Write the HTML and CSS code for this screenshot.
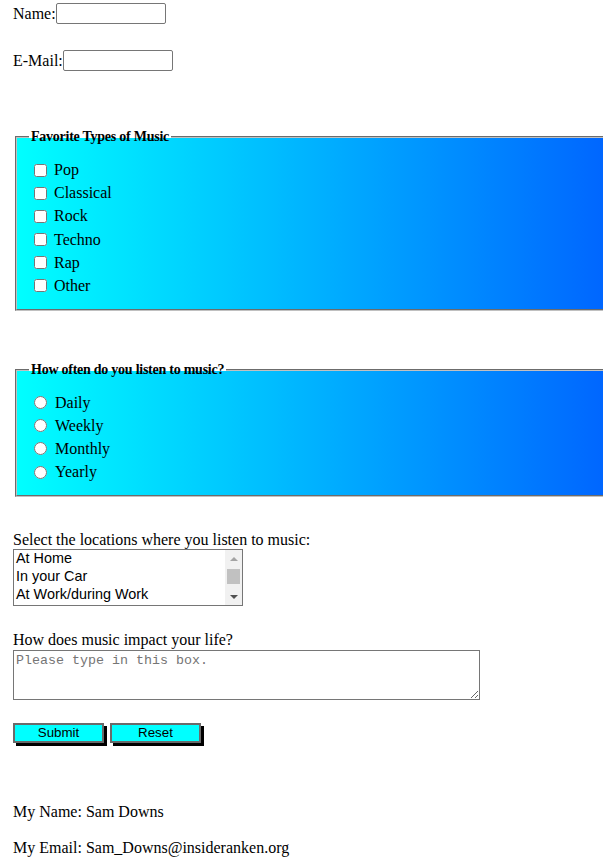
FILE: index.html
```html
<!DOCTYPE html>
<html lang="en">
<head>
<meta charset="utf-8">
<title>Music Survey</title>
<link rel="stylesheet" href="styles.css">
</head>
<body class="page">
<form class="survey">
  <div class="field-row">
    <label for="name">Name:</label>
    <input class="text-input" id="name" type="text">
  </div>
  <div class="field-row field-row--email">
    <label for="email">E-Mail:</label>
    <input class="text-input" id="email" type="text">
  </div>

  <fieldset class="group group--first">
    <legend class="group-title">Favorite Types of Music</legend>
    <div class="options">
      <label class="option"><input class="check" type="checkbox"><span>Pop</span></label>
      <label class="option"><input class="check" type="checkbox"><span>Classical</span></label>
      <label class="option"><input class="check" type="checkbox"><span>Rock</span></label>
      <label class="option"><input class="check" type="checkbox"><span>Techno</span></label>
      <label class="option"><input class="check" type="checkbox"><span>Rap</span></label>
      <label class="option"><input class="check" type="checkbox"><span>Other</span></label>
    </div>
  </fieldset>

  <fieldset class="group group--second">
    <legend class="group-title">How often do you listen to music?</legend>
    <div class="options">
      <label class="option option--radio"><input class="radio" type="radio" name="often"><span>Daily</span></label>
      <label class="option option--radio"><input class="radio" type="radio" name="often"><span>Weekly</span></label>
      <label class="option option--radio"><input class="radio" type="radio" name="often"><span>Monthly</span></label>
      <label class="option option--radio"><input class="radio" type="radio" name="often"><span>Yearly</span></label>
    </div>
  </fieldset>

  <div class="block-label block-label--select">Select the locations where you listen to music:</div>
  <div class="listbox" role="listbox">
    <div class="listbox-items">
      <div class="listbox-item" role="option">At Home</div>
      <div class="listbox-item" role="option">In your Car</div>
      <div class="listbox-item" role="option">At Work/during Work</div>
    </div>
    <div class="scrollbar">
      <div class="scroll-btn"><span class="arrow-up"></span></div>
      <div class="scroll-track"><div class="scroll-thumb"></div></div>
      <div class="scroll-btn"><span class="arrow-down"></span></div>
    </div>
  </div>

  <label class="block-label block-label--area" for="impact">How does music impact your life?</label>
  <textarea class="textbox" id="impact" placeholder="Please type in this box."></textarea>

  <div class="actions">
    <button class="btn" type="submit">Submit</button>
    <button class="btn" type="reset">Reset</button>
  </div>
</form>

<div class="info">
  <p class="info-line">My Name: Sam Downs</p>
  <p class="info-line info-line--second">My Email: Sam_Downs@insideranken.org</p>
</div>
</body>
</html>
```

FILE: styles.css
```css
html, body {
  overflow: hidden;
}

.page {
  margin: 0;
  padding: 3px 0 0 13px;
  font-family: "Liberation Serif", "Times New Roman", serif;
  font-size: 16px;
  color: #000;
  background: #fff;
}

.survey {
  margin: 0;
}

.field-row {
  display: flex;
  align-items: center;
  gap: 0;
  height: 21px;
}

.field-row--email {
  margin-top: 26px;
}

.text-input {
  box-sizing: border-box;
  width: 110px;
  height: 21px;
  margin: 0;
  padding: 1px 2px;
  border: 1px solid #767676;
  border-radius: 2px;
  background: #fff;
  font-family: "Liberation Sans", Arial, sans-serif;
  font-size: 13.33px;
}

.group {
  box-sizing: border-box;
  width: 640px;
  margin: 57px 0 0 2px;
  padding: 0 12px 11px 12px;
  border: 2px groove #c0c0c0;
  background: linear-gradient(to right, #00ffff 0px, #0066ff 588px, #0060ff 640px);
}

.group--second {
  margin-top: 50px;
}

.group-title {
  padding: 0 2px;
  font-weight: bold;
  font-size: 14px;
  letter-spacing: -0.25px;
  line-height: 18.4px;
}

.options {
  display: flex;
  flex-direction: column;
  margin-top: 12px;
}

.option {
  display: flex;
  align-items: center;
  gap: 7px;
  height: 23.2px;
  padding-left: 5px;
}

.option--radio {
  gap: 8px;
}

.check,
.radio {
  width: 13px;
  height: 13px;
  margin: 0;
}

.block-label {
  display: block;
  line-height: 18.4px;
}

.block-label--select {
  margin-top: 34px;
}

.block-label--area {
  margin-top: 25px;
}

.listbox {
  box-sizing: border-box;
  display: flex;
  width: 230px;
  height: 57px;
  border: 1px solid #767676;
  background: #fff;
}

.listbox-items {
  flex: 1;
  margin-top: -1px;
  padding: 0 2px;
  font-family: "Liberation Sans", Arial, sans-serif;
  font-size: 14.4px;
  line-height: 18px;
  overflow: hidden;
}

.scrollbar {
  display: flex;
  flex-direction: column;
  width: 17px;
  background: #f1f1f1;
}

.scroll-btn {
  display: flex;
  align-items: center;
  justify-content: center;
  height: 17px;
}

.scroll-track {
  flex: 1;
  padding: 2px 2px 0;
}

.scroll-thumb {
  height: 15px;
  background: #c1c1c1;
}

.arrow-up {
  width: 0;
  height: 0;
  border-left: 4px solid transparent;
  border-right: 4px solid transparent;
  border-bottom: 4px solid #a3a3a3;
}

.arrow-down {
  width: 0;
  height: 0;
  border-left: 4px solid transparent;
  border-right: 4px solid transparent;
  border-top: 4px solid #505050;
}

.textbox {
  display: block;
  box-sizing: border-box;
  width: 467px;
  height: 50px;
  margin: 0;
  padding: 2px;
  border: 1px solid #767676;
  border-radius: 0;
  font-family: "Liberation Mono", "Courier New", monospace;
  font-size: 13.33px;
  resize: both;
}

.textbox::placeholder {
  color: #757575;
}

.actions {
  display: flex;
  gap: 6px;
  margin-top: 23px;
}

.btn {
  box-sizing: border-box;
  width: 91px;
  height: 20px;
  margin: 0;
  padding: 0;
  border: 2px solid #6a6a6a;
  background: #00ffff;
  box-shadow: 3px 3px 0 #000;
  font-family: "Liberation Sans", Arial, sans-serif;
  font-size: 13.33px;
  color: #000;
  line-height: 16px;
}

.info {
  margin-top: 60px;
}

.info-line {
  margin: 0;
  line-height: 18.4px;
}

.info-line--second {
  margin-top: 18px;
}
```
